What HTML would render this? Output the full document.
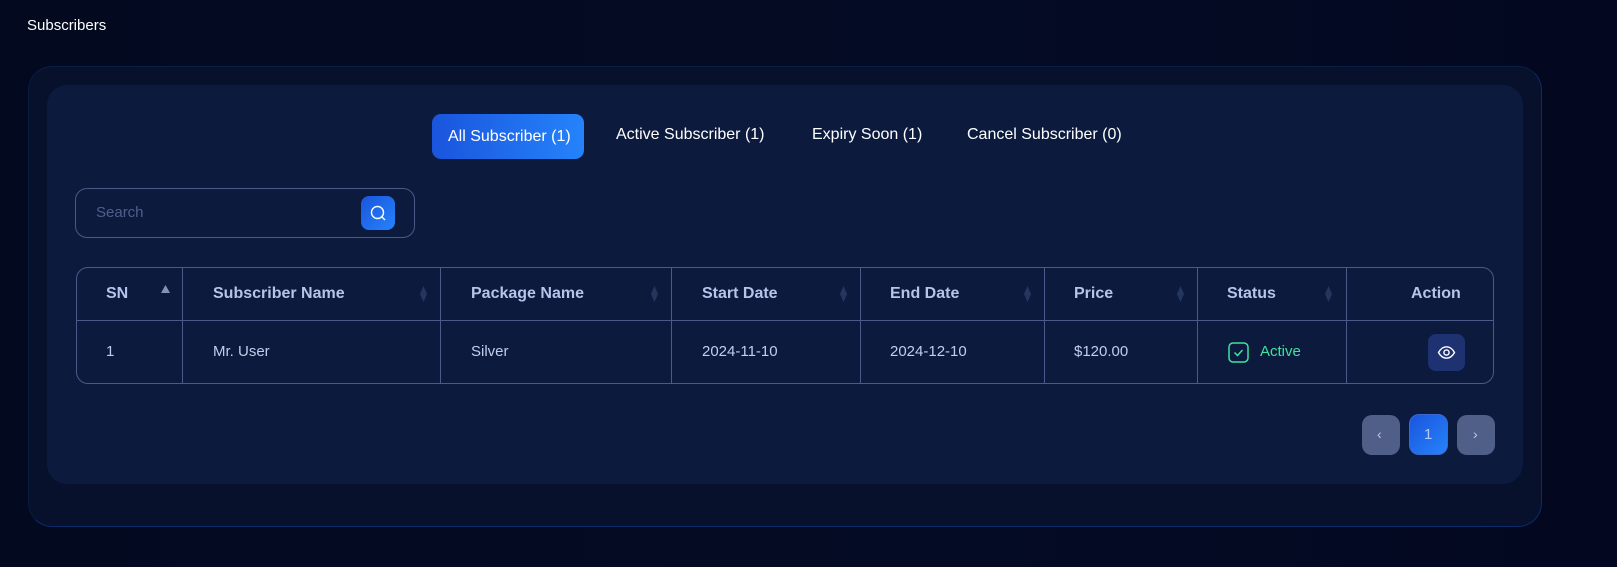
<!DOCTYPE html>
<html><head><meta charset="utf-8"><style>
*{margin:0;padding:0;box-sizing:border-box}
body{width:1617px;height:567px;overflow:hidden;background:linear-gradient(90deg,#030a20,#040b24 60%,#030820);font-family:"Liberation Sans",sans-serif;position:relative;color:#fff}
.a{position:absolute;white-space:nowrap}
.outer{position:absolute;left:28px;top:66px;width:1514px;height:461px;border-radius:24px;background:#07112b;border:1px solid #0d2a6b;border-left-color:#091a40;border-top-color:#0a1c48}
.inner{position:absolute;left:47px;top:85px;width:1476px;height:399px;border-radius:20px;background:#0c1a3e}
.tab{font-size:16px;color:#fff;top:126px}
.btn{position:absolute;border-radius:8px}
.th{font-size:16px;font-weight:bold;color:#b7c3ea;top:285px}
.td{font-size:15px;color:#c4cdeb;top:343px}
.vl{position:absolute;top:268px;width:1px;height:115px;background:#4a5a8a}
.dia{position:absolute;top:286px;width:7px;height:16px}
</style></head><body>
<div class="a" style="left:27px;top:17px;font-size:15px;color:#fff">Subscribers</div>
<div class="outer"></div>
<div class="inner"></div>
<div class="btn" style="left:432px;top:114px;width:152px;height:45px;background:linear-gradient(90deg,#1a55dd,#2583fb);border-radius:9px"></div>
<div class="a tab" style="left:448px;top:128px">All Subscriber (1)</div>
<div class="a tab" style="left:616px">Active Subscriber (1)</div>
<div class="a tab" style="left:812px">Expiry Soon (1)</div>
<div class="a tab" style="left:967px">Cancel Subscriber (0)</div>
<div style="position:absolute;left:75px;top:188px;width:340px;height:50px;border:1px solid #4a5a86;border-radius:12px"></div>
<div class="a" style="left:96px;top:204px;font-size:15px;color:#4f5f8a">Search</div>
<div class="btn" style="left:361px;top:196px;width:34px;height:34px;background:linear-gradient(135deg,#1a55dd,#2583fb)"></div>
<svg class="a" style="left:369px;top:204px" width="18" height="18" viewBox="0 0 18 18"><circle cx="8.5" cy="8.5" r="6" fill="none" stroke="#fff" stroke-width="1.4"/><path d="M13 13l3 3" stroke="#fff" stroke-width="1.4"/></svg>
<div style="position:absolute;left:76px;top:267px;width:1418px;height:117px;border:1px solid #4a5a8a;border-radius:12px"></div>
<div style="position:absolute;left:77px;top:320px;width:1416px;height:1px;background:#4a5a8a"></div>
<div class="vl" style="left:182px"></div><div class="vl" style="left:440px"></div><div class="vl" style="left:671px"></div><div class="vl" style="left:860px"></div><div class="vl" style="left:1044px"></div><div class="vl" style="left:1197px"></div><div class="vl" style="left:1346px"></div>
<div class="a th" style="left:106px">SN</div>
<div class="a th" style="left:213px">Subscriber Name</div>
<div class="a th" style="left:471px">Package Name</div>
<div class="a th" style="left:702px">Start Date</div>
<div class="a th" style="left:890px">End Date</div>
<div class="a th" style="left:1074px">Price</div>
<div class="a th" style="left:1227px">Status</div>
<div class="a th" style="left:1411px">Action</div>
<svg class="a" style="left:161px;top:285px" width="9" height="8"><path d="M4.5 0L9 8H0z" fill="#8592b8"/></svg>
<svg class="dia" style="left:420px" viewBox="0 0 7 16"><path d="M3.5 0L7 8L3.5 16L0 8z" fill="#25365e"/></svg>
<svg class="dia" style="left:651px" viewBox="0 0 7 16"><path d="M3.5 0L7 8L3.5 16L0 8z" fill="#25365e"/></svg>
<svg class="dia" style="left:840px" viewBox="0 0 7 16"><path d="M3.5 0L7 8L3.5 16L0 8z" fill="#25365e"/></svg>
<svg class="dia" style="left:1024px" viewBox="0 0 7 16"><path d="M3.5 0L7 8L3.5 16L0 8z" fill="#25365e"/></svg>
<svg class="dia" style="left:1177px" viewBox="0 0 7 16"><path d="M3.5 0L7 8L3.5 16L0 8z" fill="#25365e"/></svg>
<svg class="dia" style="left:1325px" viewBox="0 0 7 16"><path d="M3.5 0L7 8L3.5 16L0 8z" fill="#25365e"/></svg>
<div class="a td" style="left:106px">1</div>
<div class="a td" style="left:213px">Mr. User</div>
<div class="a td" style="left:471px">Silver</div>
<div class="a td" style="left:702px">2024-11-10</div>
<div class="a td" style="left:890px">2024-12-10</div>
<div class="a td" style="left:1074px">$120.00</div>
<svg class="a" style="left:1228px;top:342px" width="21" height="21" viewBox="0 0 21 21"><rect x="1" y="1" width="19" height="19" rx="4" fill="none" stroke="#3fe39b" stroke-width="1.5"/><path d="M6.5 10.5l3 3 5-5.5" fill="none" stroke="#3fe39b" stroke-width="1.5"/></svg>
<div class="a td" style="left:1260px;color:#3fe39b">Active</div>
<div class="btn" style="left:1428px;top:334px;width:37px;height:37px;background:#1e3272"></div>
<svg class="a" style="left:1437px;top:343px" width="19" height="19" viewBox="0 0 19 19"><path d="M1.5 9.5C4 5 7 3.8 9.5 3.8S15 5 17.5 9.5C15 14 12 15.2 9.5 15.2S4 14 1.5 9.5z" fill="none" stroke="#fff" stroke-width="1.4"/><circle cx="9.5" cy="9.5" r="2.6" fill="none" stroke="#fff" stroke-width="1.4"/></svg>
<div class="btn" style="left:1362px;top:415px;width:38px;height:40px;background:#505f88;border-radius:10px"></div>
<div class="a" style="left:1377px;top:426px;font-size:14px;color:#c0c8e6">‹</div>
<div class="btn" style="left:1409px;top:414px;width:39px;height:41px;background:linear-gradient(135deg,#1a55dd,#2583fb);border-radius:10px;border:1px solid #3a6ad0"></div>
<div class="a" style="left:1424px;top:426px;font-size:15px;color:#b9c8f0">1</div>
<div class="btn" style="left:1457px;top:415px;width:38px;height:40px;background:#505f88;border-radius:10px"></div>
<div class="a" style="left:1473px;top:426px;font-size:14px;color:#c0c8e6">›</div>
</body></html>
